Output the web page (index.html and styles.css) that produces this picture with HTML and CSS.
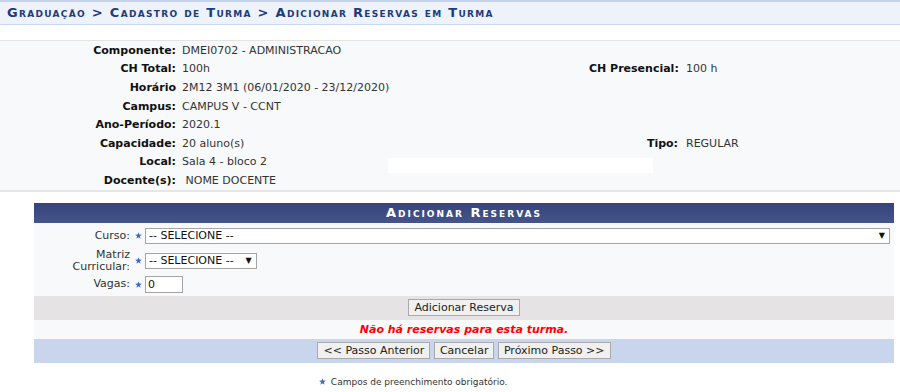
FILE: index.html
```html
<!DOCTYPE html>
<html lang="pt-BR">
    <head>
        <meta charset="UTF-8">
        <title>Adicionar Reservas em Turma</title>
        <link rel="stylesheet" href="styles.css">
    </head>
    <body>
        <!-- Breadcrumb -->
        <h2 class="title">Graduação &gt; Cadastro de Turma &gt; Adicionar Reservas em Turma</h2>

        <!-- Dados da turma -->
        <div class="info-wrap">
            <table class="info">
                <colgroup>
                    <col class="c-label">
                    <col class="c-value">
                    <col class="c-label2">
                    <col>
                </colgroup>
                <tr><th>Componente:</th><td>DMEI0702 - ADMINISTRACAO</td><th></th><td></td></tr>
                <tr><th>CH Total:</th><td>100h</td><th>CH Presencial:</th><td>100 h</td></tr>
                <tr><th>Horário</th><td>2M12 3M1 (06/01/2020 - 23/12/2020)</td><th></th><td></td></tr>
                <tr><th>Campus:</th><td>CAMPUS V - CCNT</td><th></th><td></td></tr>
                <tr><th>Ano-Período:</th><td>2020.1</td><th></th><td></td></tr>
                <tr><th>Capacidade:</th><td>20 aluno(s)</td><th>Tipo:</th><td>REGULAR</td></tr>
                <tr><th>Local:</th><td>Sala 4 - bloco 2</td><th></th><td></td></tr>
                <tr><th>Docente(s):</th><td>&nbsp;NOME DOCENTE</td><th></th><td></td></tr>
            </table>
            <span class="redact"></span>
        </div>

        <!-- Formulario -->
        <table class="form">
            <caption>Adicionar Reservas</caption>
            <tbody>
                <tr class="field field-curso">
                    <th>Curso:</th>
                    <td class="req"><svg class="star" viewBox="0 0 10 10"><path d="M5 0.3 6.2 3.7 9.8 3.8 7 6 8 9.5 5 7.5 2 9.5 3 6 0.2 3.8 3.8 3.7Z"/></svg></td>
                    <td>
                        <span class="select select-wide">-- SELECIONE --<span class="arrow">▼</span></span>
                    </td>
                </tr>
                <tr class="field field-matriz">
                    <th>Matriz<br>Curricular:</th>
                    <td class="req"><svg class="star" viewBox="0 0 10 10"><path d="M5 0.3 6.2 3.7 9.8 3.8 7 6 8 9.5 5 7.5 2 9.5 3 6 0.2 3.8 3.8 3.7Z"/></svg></td>
                    <td>
                        <span class="select">-- SELECIONE --<span class="arrow">▼</span></span>
                    </td>
                </tr>
                <tr class="field field-vagas">
                    <th>Vagas:</th>
                    <td class="req"><svg class="star" viewBox="0 0 10 10"><path d="M5 0.3 6.2 3.7 9.8 3.8 7 6 8 9.5 5 7.5 2 9.5 3 6 0.2 3.8 3.8 3.7Z"/></svg></td>
                    <td><input class="vagas" type="text" value="0"></td>
                </tr>
                <tr class="sub">
                    <td colspan="3"><button class="btn">Adicionar Reserva</button></td>
                </tr>
                <tr class="msg">
                    <td colspan="3">Não há reservas para esta turma.</td>
                </tr>
            </tbody>
            <tfoot>
                <tr>
                    <td colspan="3">
                        <button class="btn">&lt;&lt; Passo Anterior</button>
                        <button class="btn">Cancelar</button>
                        <button class="btn">Próximo Passo &gt;&gt;</button>
                    </td>
                </tr>
            </tfoot>
        </table>

        <!-- Legenda -->
        <p class="obrigatorio">
            <svg class="star" viewBox="0 0 10 10"><path d="M5 0.3 6.2 3.7 9.8 3.8 7 6 8 9.5 5 7.5 2 9.5 3 6 0.2 3.8 3.8 3.7Z"/></svg>
            Campos de preenchimento obrigatório.
        </p>
    </body>
</html>
```

FILE: styles.css
```css
body {
    margin: 0;
    font-family: "DejaVu Sans", Verdana, sans-serif;
    font-size: 11px;
    color: #222;
    background-color: #fff;
}

.title {
    margin: 0;
    height: 22px;
    line-height: 22px;
    padding-left: 7px;
    border-top: 2px solid #c4d2eb;
    border-bottom: 1px solid #c8d8f0;
    background-color: #eef3fb;
    color: #1f3b7a;
    font-size: 13px;
    font-weight: bold;
    font-variant: small-caps;
    letter-spacing: 1.3px;
}

/* Dados da turma */
.info-wrap {
    position: relative;
    margin-top: 15px;
    border-top: 1px solid #e3e3e3;
    border-bottom: 2px solid #e6e6e6;
    background-color: #f8f9fb;
}

.info {
    width: 100%;
    border-collapse: collapse;
    table-layout: fixed;
}

.c-label {
    width: 179px;
}

.c-value {
    width: 410px;
}

.c-label2 {
    width: 92px;
}

.info th,
.info td {
    height: 18.6px;
    padding: 0;
    white-space: nowrap;
}

.info th {
    text-align: right;
    padding-right: 3px;
    color: #111;
}

.info td {
    padding-left: 3px;
    color: #333;
}

.info td:last-child {
    padding-left: 5px;
}

.redact {
    position: absolute;
    left: 388px;
    top: 117px;
    width: 265px;
    height: 15px;
    background-color: #fff;
}

/* Formulario */
.form {
    width: 860px;
    margin: 11px 0 0 34px;
    border-collapse: collapse;
}

.form caption {
    height: 20px;
    line-height: 20px;
    background: linear-gradient(#35457a, #45558c);
    color: #fff;
    font-size: 13px;
    font-weight: bold;
    font-variant: small-caps;
    letter-spacing: 2px;
    text-align: center;
}

.form tbody tr {
    background-color: #f8f9fb;
}

.field th {
    width: 96px;
    padding: 0 3px 0 0;
    text-align: right;
    font-weight: normal;
    line-height: 12px;
    color: #333;
}

.field td {
    padding: 0;
}

.field-curso th,
.field-curso td {
    height: 26px;
}

.field-matriz th,
.field-matriz td {
    height: 24px;
}

.field-vagas th,
.field-vagas td {
    height: 23px;
}

.field td.req {
    width: 10px;
    padding-left: 2px;
}

.star {
    width: 7px;
    height: 7px;
    fill: #3d6ac6;
}

.select {
    position: relative;
    display: inline-block;
    vertical-align: middle;
    box-sizing: border-box;
    height: 16px;
    line-height: 14px;
    padding: 0 22px 0 3px;
    border: 1px solid #a5a5a5;
    background-color: #fff;
    color: #111;
}

.select-wide {
    width: 745px;
}

.arrow {
    position: absolute;
    right: 4px;
    top: 0;
    font-size: 8px;
}

.vagas {
    box-sizing: border-box;
    width: 38px;
    height: 17px;
    margin: 0;
    padding: 0 2px;
    vertical-align: middle;
    border: 1px solid #a5a5a5;
    font-family: inherit;
    font-size: 11px;
    color: #111;
}

.form .sub {
    background-color: #e5e3e3;
}

.sub td {
    height: 24px;
    padding: 0;
    text-align: center;
}

.btn {
    height: 17px;
    padding: 0 5px;
    border: 1px solid #a9a9a9;
    background-color: #f0f0f0;
    font-family: inherit;
    font-size: 11px;
    color: #222;
}

.msg td {
    height: 19px;
    padding: 0;
    text-align: center;
    color: #f00;
    font-weight: bold;
    font-style: italic;
}

.form tfoot td {
    height: 24px;
    padding: 0;
    text-align: center;
    background-color: #c8d5ec;
}

.obrigatorio {
    margin: 14px 0 0 319px;
    font-size: 9px;
    color: #333;
}

.obrigatorio .star {
    margin-right: 2px;
}
```
